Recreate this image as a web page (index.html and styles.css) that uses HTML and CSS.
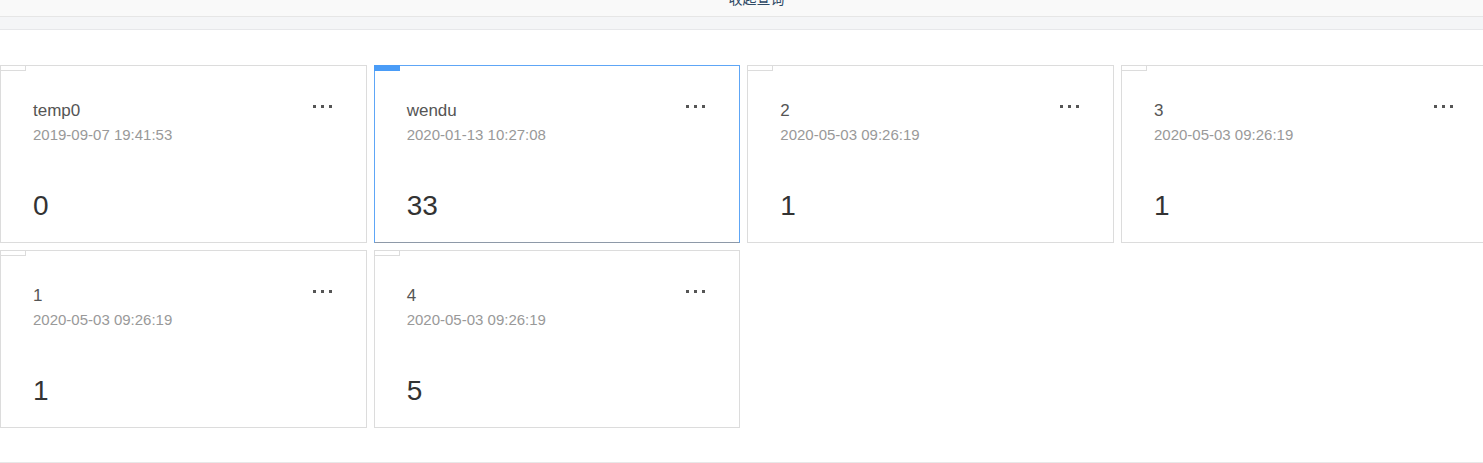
FILE: index.html
```html
<!DOCTYPE html>
<html lang="zh">
<head>
<meta charset="utf-8">
<title>Cards</title>
<link rel="stylesheet" href="styles.css">
</head>
<body>
<div class="topbar"><span class="toggle">收起查询</span></div>
<div class="band"></div>
<main class="content">
  <div class="grid">
    <div class="card">
      <span class="tab"></span>
      <div class="head"><div class="title">temp0</div><span class="more"><i></i><i></i><i></i></span></div>
      <div class="date">2019-09-07 19:41:53</div>
      <div class="value">0</div>
    </div>
    <div class="card active">
      <span class="tab"></span>
      <div class="head"><div class="title">wendu</div><span class="more"><i></i><i></i><i></i></span></div>
      <div class="date">2020-01-13 10:27:08</div>
      <div class="value">33</div>
    </div>
    <div class="card">
      <span class="tab"></span>
      <div class="head"><div class="title">2</div><span class="more"><i></i><i></i><i></i></span></div>
      <div class="date">2020-05-03 09:26:19</div>
      <div class="value">1</div>
    </div>
    <div class="card">
      <span class="tab"></span>
      <div class="head"><div class="title">3</div><span class="more"><i></i><i></i><i></i></span></div>
      <div class="date">2020-05-03 09:26:19</div>
      <div class="value">1</div>
    </div>
    <div class="card">
      <span class="tab"></span>
      <div class="head"><div class="title">1</div><span class="more"><i></i><i></i><i></i></span></div>
      <div class="date">2020-05-03 09:26:19</div>
      <div class="value">1</div>
    </div>
    <div class="card">
      <span class="tab"></span>
      <div class="head"><div class="title">4</div><span class="more"><i></i><i></i><i></i></span></div>
      <div class="date">2020-05-03 09:26:19</div>
      <div class="value">5</div>
    </div>
  </div>
</main>
</body>
</html>
```
FILE: styles.css
```css
html, body {
  margin: 0;
  padding: 0;
  overflow: hidden;
  background: #ffffff;
  font-family: "Liberation Sans", Arial, "Noto Sans CJK SC", sans-serif;
}

.topbar {
  height: 16px;
  background: #f9f9f9;
  border-bottom: 1px solid #e6e6e6;
  overflow: hidden;
  display: flex;
  justify-content: center;
}

.toggle {
  display: block;
  margin-top: -12px;
  margin-left: 30px;
  font-size: 14px;
  line-height: 20px;
  color: #2f4a66;
  font-family: "Noto Sans CJK SC", sans-serif;
}

.band {
  height: 12px;
  background: #f4f5f7;
  border-bottom: 1px solid #e6e7ea;
}

.content {
  padding-top: 35px;
  height: 433px;
  box-sizing: border-box;
  border-bottom: 1px solid #e8e8e8;
  width: 1483px;
  overflow: hidden;
}

.grid {
  display: grid;
  grid-template-columns: repeat(4, 366.67px);
  grid-auto-rows: 178px;
  column-gap: 7px;
  row-gap: 7px;
  width: 1488px;
}

.card {
  position: relative;
  box-sizing: border-box;
  border: 1px solid #dcdcdc;
  background: #fff;
  padding: 33px 34px 0 32px;
}

.card.active {
  border-color: #5ea6f6;
  border-bottom-color: #8e99a8;
}

.tab {
  position: absolute;
  left: -1px;
  top: -1px;
  width: 24px;
  height: 4px;
  border: 1px solid #dcdcdc;
}

.card.active .tab {
  background: #4a9cf7;
  border-color: #4a9cf7;
}

.head {
  display: flex;
  justify-content: space-between;
  align-items: flex-start;
}

.title {
  font-size: 17px;
  line-height: 24px;
  color: #555;
}

.more {
  display: flex;
  gap: 5px;
  margin-top: 6px;
}

.more i {
  display: block;
  width: 3px;
  height: 3px;
  background: #555;
}

.date {
  margin-top: 1px;
  font-size: 15px;
  line-height: 22px;
  color: #999;
}

.value {
  margin-top: 42px;
  font-size: 28px;
  line-height: 36px;
  color: #333;
}
```
